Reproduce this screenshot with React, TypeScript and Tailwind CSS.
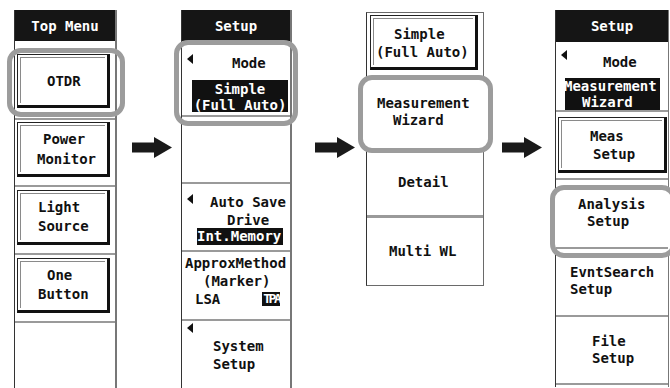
import React from "react";

function Arrow() {
  return (
    <svg width="40" height="21" viewBox="0 0 40 21">
      <rect x="0" y="5.5" width="24" height="10" fill="#1a1a1a" />
      <polygon points="22,0 40,10.5 22,21" fill="#1a1a1a" />
    </svg>
  );
}

function Tri({ cls }: { cls: string }) {
  return (
    <svg className={cls} width="6" height="10" viewBox="0 0 6 10">
      <polygon points="6,0 0,5 6,10" fill="#111" />
    </svg>
  );
}

function Btn({ cls, children }: { cls: string; children: React.ReactNode }) {
  return (
    <div
      className={
        "border-t border-l border-[#222] border-r-[3px] border-b-[3px] border-r-[#111] border-b-[#111] p-[2px] " +
        cls
      }
    >
      <div className="h-full border-t border-l border-[#8a8a8a] flex flex-col justify-center">
        {children}
      </div>
    </div>
  );
}

export default function App() {
  return (
    <div className="relative w-[670px] h-[388px] overflow-hidden bg-white flex items-start font-['DejaVu_Sans_Mono',monospace] text-[14px] leading-[18px] font-bold text-[#111] whitespace-pre">
      {/* Panel 1 */}
      <div className="ml-[14px] mt-[10px] w-[103px] h-[378px] border-l border-l-[#333] border-r-2 border-r-[#777] flex flex-col">
        <div className="h-[31px] shrink-0 bg-[#151515] text-white flex items-center justify-center">Top Menu</div>
        <div className="h-[79px] shrink-0 border-b-2 border-[#9a9a9a] pt-[13px] pl-[2px]">
          <Btn cls="w-[93px] h-[54px]">
            <div className="ml-[26px]">OTDR</div>
          </Btn>
        </div>
        <div className="h-[67px] shrink-0 border-b-2 border-[#9a9a9a] pt-[2px] pl-[2px]">
          <Btn cls="w-[93px] h-[55px]">
            <div className="ml-[22px] leading-[20px]">Power</div>
            <div className="ml-[16px] leading-[20px]">Monitor</div>
          </Btn>
        </div>
        <div className="h-[68px] shrink-0 border-b-2 border-[#9a9a9a] pt-[3px] pl-[2px]">
          <Btn cls="w-[93px] h-[55px]">
            <div className="ml-[17px] leading-[19px]">Light</div>
            <div className="ml-[17px] leading-[19px]">Source</div>
          </Btn>
        </div>
        <div className="h-[68px] shrink-0 border-b-2 border-[#9a9a9a] pt-[3px] pl-[2px]">
          <Btn cls="w-[93px] h-[55px]">
            <div className="ml-[26px] leading-[19px]">One</div>
            <div className="ml-[17px] leading-[19px]">Button</div>
          </Btn>
        </div>
        <div className="flex-1" />
      </div>

      {/* Arrow 1 */}
      <div className="w-[64px] shrink-0 pt-[137px] pl-[15px]">
        <Arrow />
      </div>

      {/* Panel 2 */}
      <div className="mt-[10px] w-[111px] h-[378px] shrink-0 border-l border-l-[#333] border-r-2 border-r-[#777] flex flex-col">
        <div className="h-[31px] shrink-0 bg-[#151515] text-white flex items-center justify-center">Setup</div>
        <div className="relative h-[76px] shrink-0 border-b-2 border-[#9a9a9a] pt-[13px]">
          <Tri cls="absolute left-[5px] top-[13px]" />
          <div className="ml-[50px]">Mode</div>
          <div className="ml-[10px] mt-[8px] w-[96px] h-[32px] bg-[#111] text-white leading-[16px] pt-[1px] flex flex-col items-center">
            <div>Simple</div>
            <div>(Full Auto)</div>
          </div>
        </div>
        <div className="h-[67px] shrink-0 border-b-2 border-[#9a9a9a]" />
        <div className="relative h-[68px] shrink-0 border-b-2 border-[#9a9a9a] pt-[9px]">
          <Tri cls="absolute left-[5px] top-[10px]" />
          <div className="ml-[28px]">Auto Save</div>
          <div className="ml-[45px]">Drive</div>
          <div className="ml-[15px] -mt-[1px] w-[86px] h-[17px] leading-[17px] bg-[#111] text-white">Int.Memory</div>
        </div>
        <div className="h-[69px] shrink-0 border-b-2 border-[#9a9a9a] pt-[2px]">
          <div className="ml-[3px]">ApproxMethod</div>
          <div className="ml-[21px]">(Marker)</div>
          <div className="flex items-center">
            <div className="ml-[13px]">LSA</div>
            <div className="ml-[42px] w-[18px] h-[14px] bg-[#111] text-white text-[13px] leading-[14px] tracking-[-2.5px] flex items-center justify-center">TPA</div>
          </div>
        </div>
        <div className="relative flex-1 pt-[16px]">
          <Tri cls="absolute left-[5px] top-[2px]" />
          <div className="ml-[31px]">System</div>
          <div className="ml-[31px]">Setup</div>
        </div>
      </div>

      {/* Arrow 2 */}
      <div className="w-[74px] shrink-0 pt-[137px] pl-[23px]">
        <Arrow />
      </div>

      {/* Panel 3 */}
      <div className="mt-[12px] w-[118px] h-[274px] shrink-0 border border-[#6a6a6a] border-l-[#333] flex flex-col">
        <div className="h-[59px] shrink-0 pt-[2px] pl-[3px]">
          <Btn cls="w-[108px] h-[55px]">
            <div className="ml-[20px] mt-[2px]">Simple</div>
            <div className="ml-[2px]">(Full Auto)</div>
          </Btn>
        </div>
        <div className="relative z-10 h-[81px] shrink-0 pt-[23px] leading-[17px]">
          <div className="ml-[10px]">Measurement</div>
          <div className="ml-[26px]">Wizard</div>
        </div>
        <div className="h-[65px] shrink-0 border-b-[3px] border-b-[#9a9a9a] pt-[20px]">
          <div className="ml-[31px]">Detail</div>
        </div>
        <div className="flex-1 pt-[24px]">
          <div className="ml-[22px]">Multi WL</div>
        </div>
      </div>

      {/* Arrow 3 */}
      <div className="w-[71px] shrink-0 pt-[137px] pl-[18px]">
        <Arrow />
      </div>

      {/* Panel 4 */}
      <div className="mt-[10px] w-[114px] h-[377px] shrink-0 border-l border-l-[#333] border-r border-r-[#777] flex flex-col">
        <div className="h-[32px] shrink-0 bg-[#151515] text-white flex items-center justify-center">Setup</div>
        <div className="relative h-[70px] shrink-0 border-b-2 border-[#9a9a9a] pt-[11px]">
          <Tri cls="absolute left-[5px] top-[8px]" />
          <div className="ml-[47px]">Mode</div>
          <div className="ml-[9px] mt-[7px] w-[95px] h-[32px] bg-[#111] text-white leading-[16px] overflow-hidden">
            <div className="-ml-[1px]">Measurement</div>
            <div className="ml-[17px]">Wizard</div>
          </div>
        </div>
        <div className="h-[68px] shrink-0 border-b-2 border-[#9a9a9a] pt-[5px] pl-[2px]">
          <Btn cls="w-[109px] h-[56px]">
            <div className="ml-[28px]">Meas</div>
            <div className="ml-[31px]">Setup</div>
          </Btn>
        </div>
        <div className="relative z-10 h-[69px] shrink-0 border-b-2 border-[#9a9a9a] pt-[16px] leading-[17px]">
          <div className="ml-[22px]">Analysis</div>
          <div className="ml-[31px]">Setup</div>
        </div>
        <div className="h-[68px] shrink-0 border-b-2 border-[#9a9a9a] pt-[15px] leading-[17px]">
          <div className="ml-[14px]">EvntSearch</div>
          <div className="ml-[14px]">Setup</div>
        </div>
        <div className="h-[68px] shrink-0 border-b-2 border-[#9a9a9a] pt-[16px] leading-[17px]">
          <div className="ml-[36px]">File</div>
          <div className="ml-[36px]">Setup</div>
        </div>
      </div>

      {/* Highlight rings (overlay) */}
      <div className="absolute left-[7px] top-[48px] w-[118px] h-[69px] border-[5px] border-[#9c9c9c] rounded-[14px]" />
      <div className="absolute left-[174px] top-[40px] w-[124px] h-[86px] border-[5px] border-[#9c9c9c] rounded-[14px]" />
      <div className="absolute left-[358px] top-[75px] w-[135px] h-[78px] border-[5px] border-[#9c9c9c] rounded-[14px] bg-white" />
      <div className="absolute left-[550px] top-[185px] w-[126px] h-[73px] border-[5px] border-[#9c9c9c] rounded-[14px] bg-white" />
    </div>
  );
}
